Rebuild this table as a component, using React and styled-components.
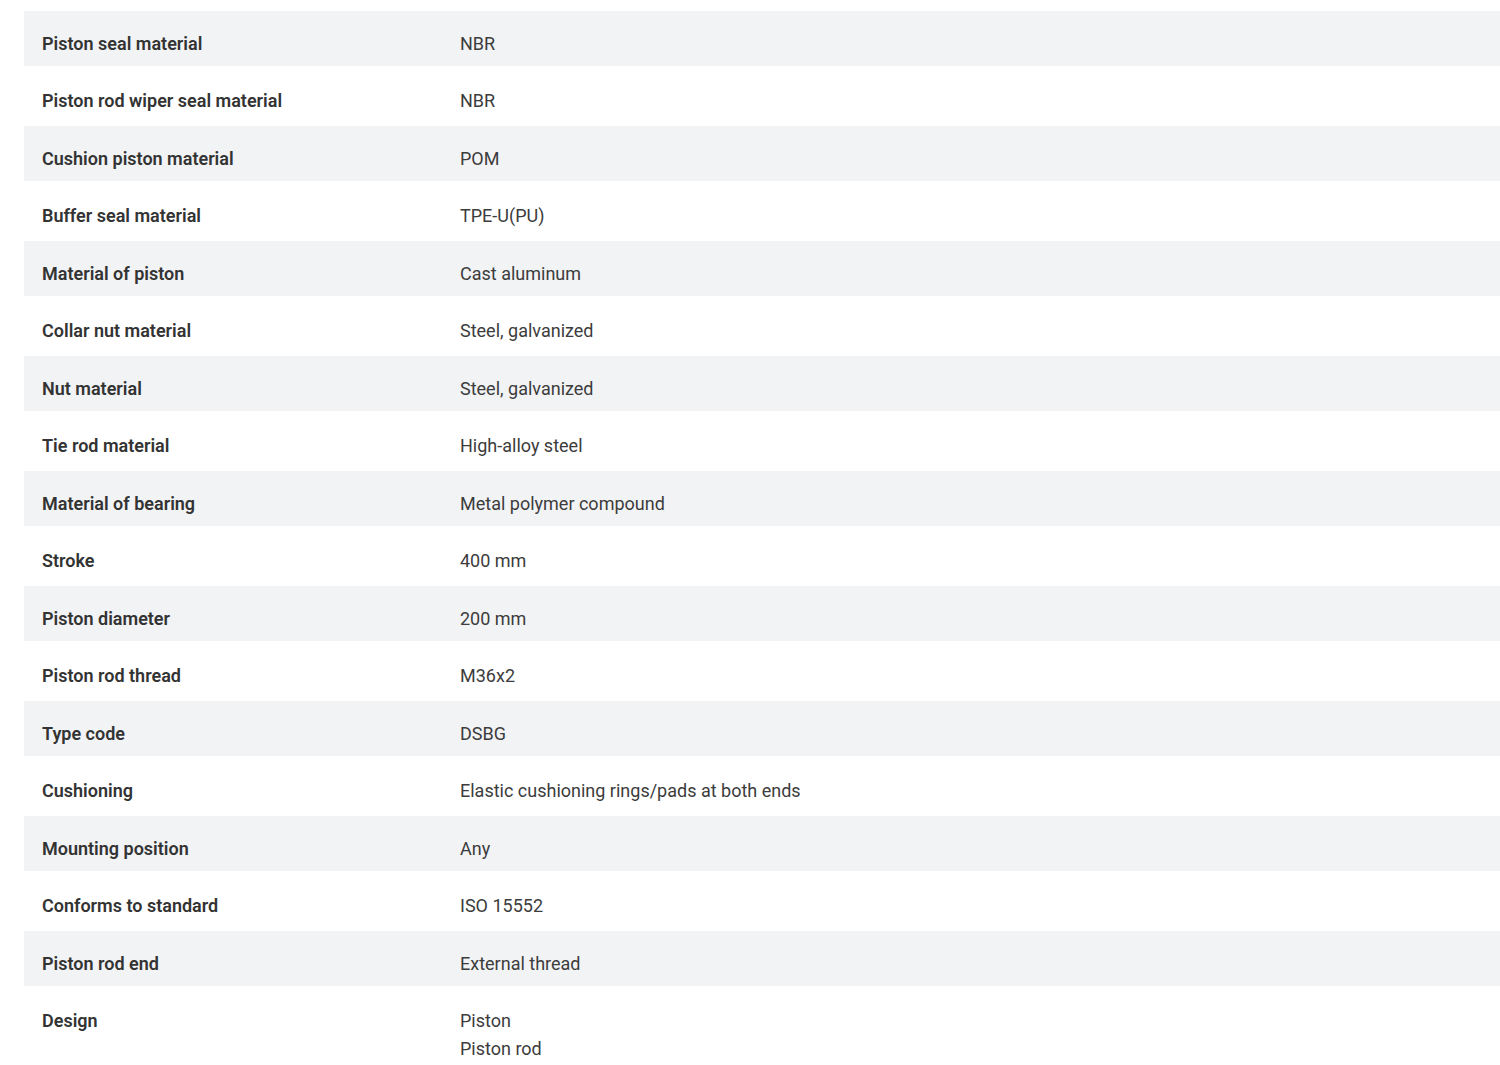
import React from 'react';
import styled, { createGlobalStyle } from 'styled-components';

const GlobalStyle = createGlobalStyle`
  html, body {
    margin: 0;
    padding: 0;
    background: #ffffff;
  }
  body {
    font-family: Roboto, 'Liberation Sans', sans-serif;
    -webkit-font-smoothing: antialiased;
  }
`;

const Page = styled.div`
  padding: 11px 0 0 24px;
`;

const SpecTable = styled.div`
  display: flex;
  flex-direction: column;
  width: 100%;
`;

const Row = styled.div`
  display: grid;
  grid-template-columns: 436px 1fr;
  align-items: start;
  background: ${p => (p.$striped ? '#f2f3f5' : '#ffffff')};
  padding: ${p => (p.$striped ? '19px 0 8px' : '21px 0 11px')};
`;

const Label = styled.div`
  padding-left: 18px;
  font-size: 18px;
  line-height: 28px;
  font-weight: 600;
  color: #333333;
`;

const Value = styled.div`
  display: flex;
  flex-direction: column;
  font-size: 18px;
  line-height: 28px;
  font-weight: 400;
  color: #3c3c3c;
`;

const specs = [
  ['Piston seal material', ['NBR']],
  ['Piston rod wiper seal material', ['NBR']],
  ['Cushion piston material', ['POM']],
  ['Buffer seal material', ['TPE-U(PU)']],
  ['Material of piston', ['Cast aluminum']],
  ['Collar nut material', ['Steel, galvanized']],
  ['Nut material', ['Steel, galvanized']],
  ['Tie rod material', ['High-alloy steel']],
  ['Material of bearing', ['Metal polymer compound']],
  ['Stroke', ['400 mm']],
  ['Piston diameter', ['200 mm']],
  ['Piston rod thread', ['M36x2']],
  ['Type code', ['DSBG']],
  ['Cushioning', ['Elastic cushioning rings/pads at both ends']],
  ['Mounting position', ['Any']],
  ['Conforms to standard', ['ISO 15552']],
  ['Piston rod end', ['External thread']],
  ['Design', ['Piston', 'Piston rod']],
];

export default function App() {
  return (
    <>
      <GlobalStyle />
      <Page>
        <SpecTable>
          {specs.map(([label, values], i) => (
            <Row key={label} $striped={i % 2 === 0}>
              <Label>{label}</Label>
              <Value>
                {values.map(v => (
                  <span key={v}>{v}</span>
                ))}
              </Value>
            </Row>
          ))}
        </SpecTable>
      </Page>
    </>
  );
}
